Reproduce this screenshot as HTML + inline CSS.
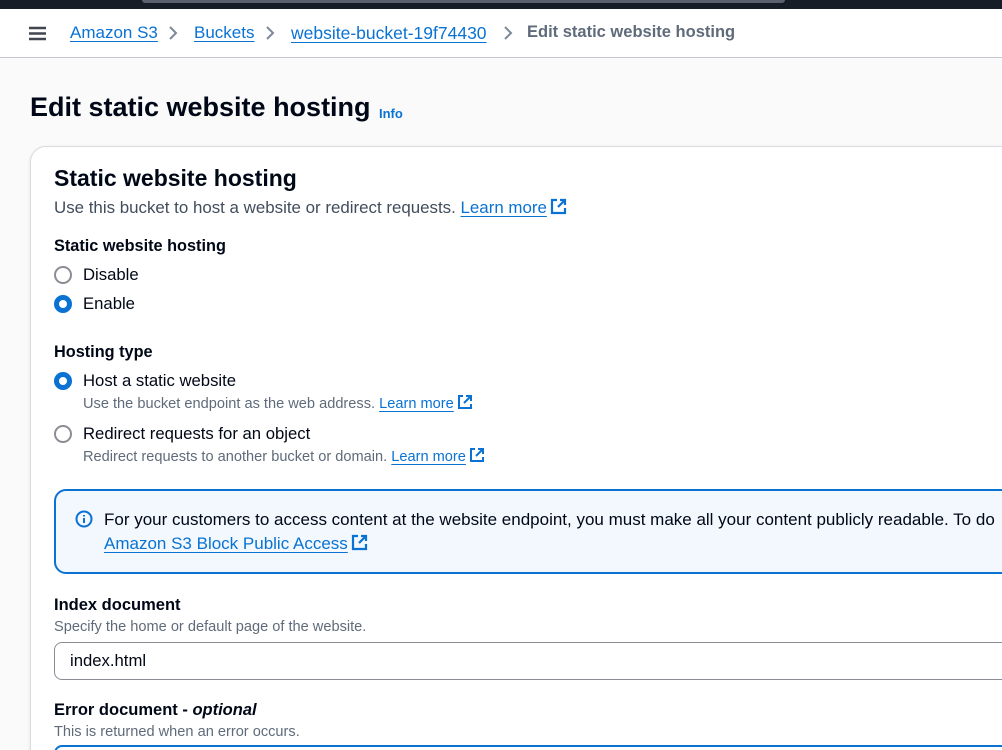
<!DOCTYPE html>
<html><head><meta charset="utf-8"><style>
*{margin:0;padding:0;box-sizing:border-box}
html{width:1002px;height:750px;overflow:hidden}
body{width:1002px;height:750px;overflow:hidden;background:#fafafa;font-family:"Liberation Sans",sans-serif;color:#000716;position:relative}
.a{position:absolute;white-space:nowrap}
a{color:#0972d3;text-decoration:underline;text-underline-offset:3px}
.ext{display:inline-block;vertical-align:-2px;margin-left:3px}
.r{position:absolute;width:18px;height:18px;border-radius:50%;border:2px solid #8c8c94;background:#fff}
.r.on{border:5px solid #0972d3}
.sm{font-size:14.6px;color:#5f6b7a}
.t{font-size:16.7px}
</style></head><body>
<div class="a" style="left:0;top:0;width:1002px;height:9px;background:#161d26"></div>
<div class="a" style="left:142px;top:0;width:643px;height:3px;background:#5a6270;border-radius:0 0 6px 6px"></div>
<div class="a" style="left:0;top:9px;width:1002px;height:49px;background:#fff;border-bottom:1px solid #c6c6cd"></div>
<svg class="a" style="left:28px;top:26px" width="19" height="15"><path d="M1 2H18M1 7.5H18M1 13H18" stroke="#424650" stroke-width="2.4"/></svg>
<div class="a" style="left:70px;top:23px;font-size:17px"><a>Amazon S3</a></div>
<svg class="a" style="left:168px;top:26px" width="10" height="14"><path d="M2 1L8 7L2 13" fill="none" stroke="#7d8998" stroke-width="2"/></svg>
<div class="a" style="left:194px;top:23px;font-size:17px"><a>Buckets</a></div>
<svg class="a" style="left:265px;top:26px" width="10" height="14"><path d="M2 1L8 7L2 13" fill="none" stroke="#7d8998" stroke-width="2"/></svg>
<div class="a" style="left:291px;top:23px;font-size:17.5px"><a>website-bucket-19f74430</a></div>
<svg class="a" style="left:503px;top:26px" width="10" height="14"><path d="M2 1L8 7L2 13" fill="none" stroke="#7d8998" stroke-width="2"/></svg>
<div class="a" style="left:527px;top:23px;font-size:16.5px;font-weight:bold;color:#5f6b7a">Edit static website hosting</div>
<div class="a" style="left:30px;top:92px;font-size:27px;font-weight:bold">Edit static website hosting</div>
<div class="a" style="left:379px;top:106px;font-size:13px;font-weight:bold;color:#0972d3">Info</div>
<div class="a" style="left:30px;top:146px;width:1000px;height:620px;background:#fff;border:1px solid #dcdce0;border-radius:16px;box-shadow:0 1px 3px rgba(0,7,22,.1)"></div>
<div class="a" style="left:54px;top:165px;font-size:23px;font-weight:bold">Static website hosting</div>
<div class="a" style="left:54px;top:198px;font-size:16.9px;color:#414d5c">Use this bucket to host a website or redirect requests. <a>Learn more</a><svg class="ext" width="17" height="17"><path d="M7 2H2V15H15V10M10 2H15V7M15 2L8 9" fill="none" stroke="#0972d3" stroke-width="2.2"/></svg></div>
<div class="a" style="left:54px;top:237px;font-size:16.3px;font-weight:bold">Static website hosting</div>
<div class="r" style="left:54px;top:266px"></div>
<div class="a t" style="left:83px;top:265px">Disable</div>
<div class="r on" style="left:54px;top:295px"></div>
<div class="a t" style="left:83px;top:294px">Enable</div>
<div class="a" style="left:54px;top:343px;font-size:16.3px;font-weight:bold">Hosting type</div>
<div class="r on" style="left:54px;top:372px"></div>
<div class="a t" style="left:83px;top:371px">Host a static website</div>
<div class="a sm" style="left:83px;top:394px">Use the bucket endpoint as the web address. <a>Learn more</a><svg class="ext" width="16" height="16"><path d="M6 2H2V14H14V10M9 2H14V7M14 2L7 9" fill="none" stroke="#0972d3" stroke-width="2"/></svg></div>
<div class="r" style="left:54px;top:425px"></div>
<div class="a t" style="left:83px;top:424px">Redirect requests for an object</div>
<div class="a sm" style="left:83px;top:447px">Redirect requests to another bucket or domain. <a>Learn more</a><svg class="ext" width="16" height="16"><path d="M6 2H2V14H14V10M9 2H14V7M14 2L7 9" fill="none" stroke="#0972d3" stroke-width="2"/></svg></div>
<div class="a" style="left:54px;top:489px;width:1000px;height:85px;background:#f2f8fd;border:2px solid #0972d3;border-radius:12px"></div>
<svg class="a" style="left:75px;top:510px" width="18" height="18"><circle cx="9" cy="9" r="7.5" fill="none" stroke="#0972d3" stroke-width="2"/><path d="M9 8V13M9 5V6.5" stroke="#0972d3" stroke-width="2"/></svg>
<div class="a" style="left:104px;top:510px;font-size:17px">For your customers to access content at the website endpoint, you must make all your content publicly readable. To do</div>
<div class="a" style="left:104px;top:534px;font-size:17px"><a>Amazon S3 Block Public Access</a><svg class="ext" width="17" height="17"><path d="M7 2H2V15H15V10M10 2H15V7M15 2L8 9" fill="none" stroke="#0972d3" stroke-width="2.2"/></svg></div>
<div class="a" style="left:54px;top:596px;font-size:16.5px;font-weight:bold">Index document</div>
<div class="a sm" style="left:54px;top:619px">Specify the home or default page of the website.</div>
<div class="a" style="left:54px;top:642px;width:1000px;height:38px;border:1px solid #8c8c94;border-radius:8px;background:#fff"></div>
<div class="a t" style="left:70px;top:651px">index.html</div>
<div class="a" style="left:54px;top:701px;font-size:16.5px;font-weight:bold">Error document - <i>optional</i></div>
<div class="a sm" style="left:54px;top:724px">This is returned when an error occurs.</div>
<div class="a" style="left:54px;top:745px;width:1000px;height:38px;border:2px solid #0972d3;border-radius:8px;background:#fff"></div>
</body></html>
